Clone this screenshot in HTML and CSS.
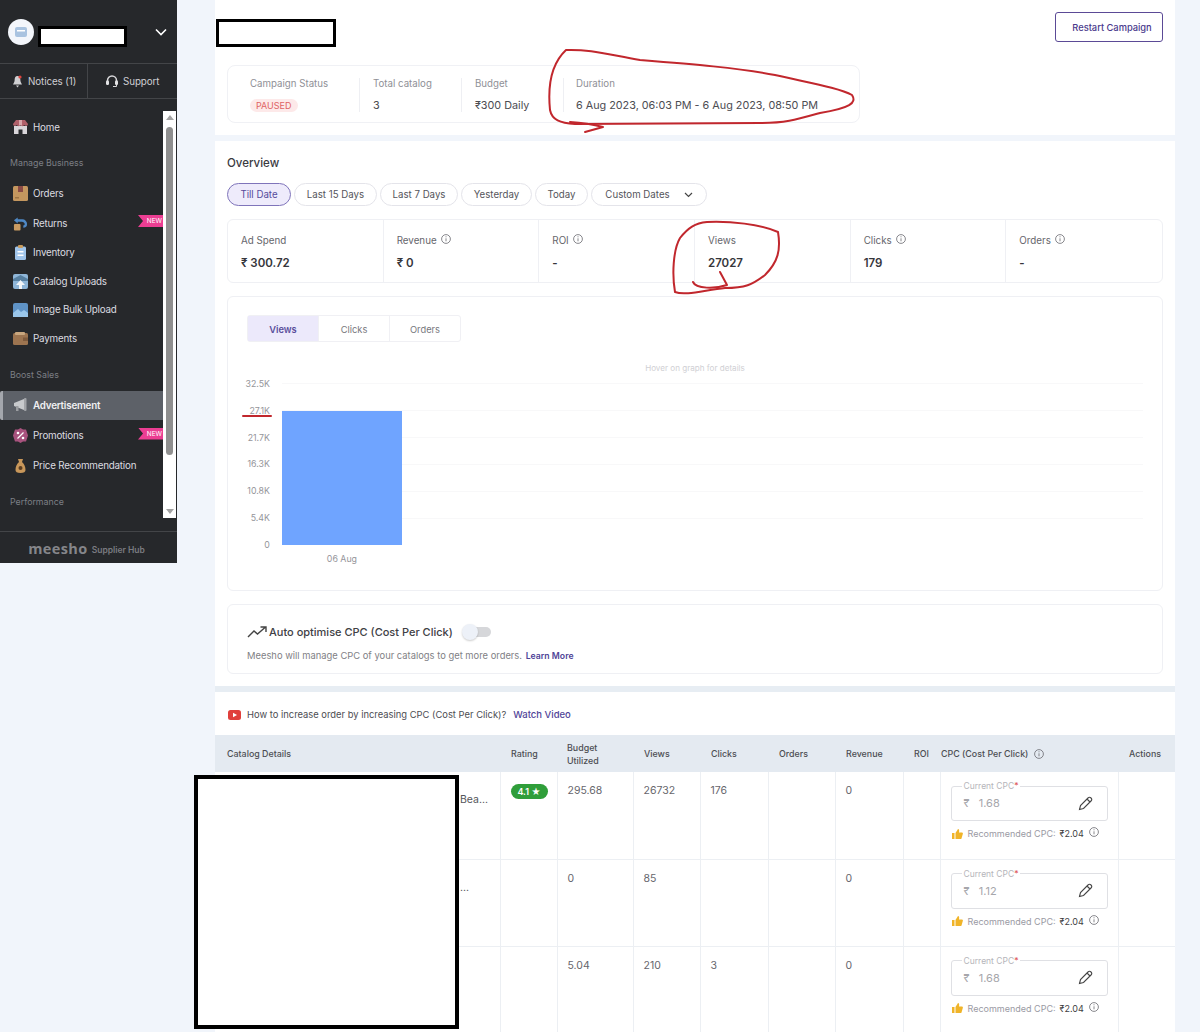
FILE: index.html
```html
<!DOCTYPE html>
<html lang="en">
<head>
<meta charset="utf-8">
<title>Campaign Details</title>
<link rel="stylesheet" href="styles.css">
</head>
<body>
<div class="page">
  <aside class="sidebar">
    <div class="brand">
      <span class="avatar"><svg width="14" height="14" viewBox="0 0 14 14"><rect x="1" y="2" width="12" height="10" rx="2" fill="#a9c3e0"/><rect x="3" y="5" width="8" height="1.5" fill="#fff"/></svg></span>
      <span class="redact-side"></span>
      <svg class="chev" width="12" height="8" viewBox="0 0 12 8"><path d="M1 1.5 6 6.5 11 1.5" fill="none" stroke="#fff" stroke-width="1.6"/></svg>
    </div>
    <div class="quick">
      <div class="quick-cell quick-notices">
        <svg width="11" height="13" viewBox="0 0 11 13"><path d="M5.5 1C3.2 1 2.6 3 2.6 5.4 2.6 7.4 1 8.6 1 9.6h9c0-1-1.6-2.2-1.6-4.2C8.4 3 7.8 1 5.5 1ZM4 10.6h3L5.5 12.4Z" fill="#cfcfd2"/><circle cx="8" cy="2" r="1.6" fill="#e0453f"/></svg>
        <span>Notices (1)</span>
      </div>
      <div class="quick-cell quick-support">
        <svg width="14" height="13" viewBox="0 0 14 13"><path d="M2.5 7V5.5a4.5 4.5 0 0 1 9 0V7" fill="none" stroke="#d8d8da" stroke-width="1.5"/><rect x="1" y="5.5" width="3" height="4.5" rx="1.2" fill="#e4e4e6"/><rect x="10" y="5.5" width="3" height="4.5" rx="1.2" fill="#e4e4e6"/><path d="M11.5 10v1.5H8" fill="none" stroke="#d8d8da"/></svg>
        <span>Support</span>
      </div>
    </div>
    <div class="menu-wrap">
      <nav class="menu">
        <a class="item item-home"><svg width="15" height="14" viewBox="0 0 15 14"><path d="M1 6h13v8H9.500V9.500h-4V14H1Z" fill="#d9d6da"/><path d="M3 0h9l3 4c0 2-2.500 2.500-3.700 1-1 1.500-2.800 1.500-3.800 0-1 1.500-2.800 1.500-3.800 0C2.500 6.500 0 6 0 4Z" fill="#b0606a"/><path d="M6 0h3v5.500H6Z" fill="#d7a5aa"/></svg>Home</a>
        <div class="label label-manage">Manage Business</div>
        <a class="item"><svg width="15" height="15" viewBox="0 0 15 15"><rect width="15" height="15" rx="1.5" fill="#c4975f"/><rect x="5" width="5" height="6" fill="#8a4a45"/><rect x="2" y="11" width="4" height="1.5" fill="#9c7444"/></svg>Orders</a>
        <a class="item"><svg width="16" height="15" viewBox="0 0 16 15"><rect x="1" y="8" width="7" height="7" rx="1" fill="#c99b62"/><path d="M1 4 5 1v2h5a5 5 0 0 1 5 5 4 4 0 0 1-4 4V9.500c1 0 1.500-.5 1.500-1.500S11 5.500 9.500 5.500H5v2Z" fill="#4f88c4"/></svg>Returns<span class="ribbon">NEW</span></a>
        <a class="item item-short"><svg width="15" height="15" viewBox="0 0 15 15"><rect x="2" y="1.500" width="11" height="13.500" rx="1.500" fill="#9fc4ea"/><rect x="5" y="0" width="5" height="3" rx="1" fill="#c79a5c"/><rect x="4.500" y="6" width="6" height="1.500" fill="#fff"/><rect x="4.500" y="9.500" width="6" height="1.500" fill="#fff"/></svg>Inventory</a>
        <a class="item item-tight"><svg width="15" height="15" viewBox="0 0 15 15"><rect width="15" height="15" rx="2" fill="#8fb6d8"/><path d="M0 5 7.500 1 15 5v2H0Z" fill="#567fa0"/><path d="M7.500 6 12 11H9v4H6v-4H3Z" fill="#f2f5f8"/></svg>Catalog Uploads</a>
        <a class="item item-tight"><svg width="15" height="14" viewBox="0 0 15 14"><rect width="15" height="14" rx="2" fill="#5f93c6"/><path d="M0 10 5 6l3 3 3-2 4 3v4H0Z" fill="#9ac6ea"/></svg>Image Bulk Upload</a>
        <a class="item item-tight"><svg width="15" height="13" viewBox="0 0 15 13"><rect y="1" width="15" height="12" rx="1.500" fill="#9c7450"/><rect x="2" width="10" height="3" rx="1" fill="#c8a67e"/><rect x="10" y="5.500" width="5" height="3.500" fill="#7e5a3c"/></svg>Payments</a>
        <div class="label label-boost">Boost Sales</div>
        <a class="item item-active"><svg width="15" height="14" viewBox="0 0 15 14"><path d="M1 5 11 1v11L1 8Z" fill="#c8cacd"/><rect x="11" y="0" width="2.500" height="13" rx="1" fill="#a2a4a8"/><rect x="3" y="8" width="2.500" height="5" fill="#9b9da1"/></svg>Advertisement</a>
        <a class="item"><svg width="15" height="15" viewBox="0 0 15 15"><path d="M7.500 0 10 1.500h3L15 7.500 13 13.500h-3L7.500 15 5 13.500H2L0 7.500 2 1.500h3Z" fill="#a8537e"/><path d="M4.500 10.500 10.500 4.500" stroke="#fff" stroke-width="1.200"/><circle cx="5" cy="5" r="1.300" fill="#fff"/><circle cx="10" cy="10" r="1.300" fill="#fff"/></svg>Promotions<span class="ribbon">NEW</span></a>
        <a class="item"><svg width="15" height="15" viewBox="0 0 15 15"><path d="M5 1h5L9 4c2.500 2 3.500 5 3.500 8 0 2-1.500 3-5 3s-5-1-5-3c0-3 1-6 3.500-8Z" fill="#c8975a"/><circle cx="7.500" cy="10" r="2" fill="#5b3e22"/></svg>Price Recommendation</a>
        <div class="label label-perf">Performance</div>
      </nav>
      <div class="scrollbar">
        <span class="arrow-up"></span>
        <span class="thumb"></span>
        <span class="arrow-down"></span>
      </div>
    </div>
    <div class="foot"><span class="logo">meesho</span><span class="hub">Supplier Hub</span></div>
  </aside>

  <main class="main">
    <section class="panel panel-top">
      <div class="top-bar">
        <span class="redact-title"></span>
        <button class="restart">Restart Campaign</button>
      </div>
      <div class="summary">
        <div class="sum-col sum-status"><div class="muted">Campaign Status</div><span class="paused">PAUSED</span></div>
        <div class="sum-col sum-catalog"><div class="muted">Total catalog</div><div class="sum-val">3</div></div>
        <div class="sum-col sum-budget"><div class="muted">Budget</div><div class="sum-val">₹300 Daily</div></div>
        <div class="sum-col sum-duration"><div class="muted">Duration</div><div class="sum-val">6 Aug 2023, 06:03 PM - 6 Aug 2023, 08:50 PM</div></div>
      </div>
    </section>

    <section class="panel panel-overview">
      <h2 class="heading">Overview</h2>
      <div class="pills">
        <button class="pill pill-on p1">Till Date</button>
        <button class="pill p2">Last 15 Days</button>
        <button class="pill p3">Last 7 Days</button>
        <button class="pill p4">Yesterday</button>
        <button class="pill p5">Today</button>
        <button class="pill p6">Custom Dates <svg width="9" height="6" viewBox="0 0 9 6"><path d="M1 1 4.500 4.500 8 1" fill="none" stroke="#444" stroke-width="1.200"/></svg></button>
      </div>
      <div class="stats">
        <div class="stat"><div class="stat-label">Ad Spend</div><div class="stat-val">₹ 300.72</div></div>
        <div class="stat"><div class="stat-label">Revenue <svg class="info" viewBox="0 0 10 10"><circle cx="5" cy="5" r="4.400"/><path d="M5 4.300v3M5 2.300v1"/></svg></div><div class="stat-val">₹ 0</div></div>
        <div class="stat"><div class="stat-label">ROI <svg class="info" viewBox="0 0 10 10"><circle cx="5" cy="5" r="4.400"/><path d="M5 4.300v3M5 2.300v1"/></svg></div><div class="stat-val">-</div></div>
        <div class="stat"><div class="stat-label">Views</div><div class="stat-val">27027</div></div>
        <div class="stat"><div class="stat-label">Clicks <svg class="info" viewBox="0 0 10 10"><circle cx="5" cy="5" r="4.400"/><path d="M5 4.300v3M5 2.300v1"/></svg></div><div class="stat-val">179</div></div>
        <div class="stat"><div class="stat-label">Orders <svg class="info" viewBox="0 0 10 10"><circle cx="5" cy="5" r="4.400"/><path d="M5 4.300v3M5 2.300v1"/></svg></div><div class="stat-val">-</div></div>
      </div>
      <div class="chart-card">
        <div class="tabs">
          <div class="tab tab-on">Views</div>
          <div class="tab">Clicks</div>
          <div class="tab">Orders</div>
        </div>
        <div class="hover-note">Hover on graph for details</div>
        <div class="chart">
          <div class="axis">
            <span>32.5K</span><span>27.1K</span><span>21.7K</span><span>16.3K</span><span>10.8K</span><span>5.4K</span><span>0</span>
          </div>
          <div class="plot-wrap">
            <div class="plot"><div class="bar"></div></div>
            <div class="x-label">06 Aug</div>
          </div>
        </div>
      </div>
      <div class="auto-card">
        <div class="auto-title">
          <svg width="20" height="12" viewBox="0 0 20 12"><path d="M1 11 7 5l3.500 3L18 1.500M13.500 1H19v5" fill="none" stroke="#444" stroke-width="1.400"/></svg>
          <span>Auto optimise CPC (Cost Per Click)</span>
          <span class="toggle"><span class="knob"></span></span>
        </div>
        <p class="auto-sub">Meesho will manage CPC of your catalogs to get more orders. <a class="learn">Learn More</a></p>
      </div>
    </section>

    <section class="panel panel-table">
      <div class="video-row">
        <svg width="13" height="10" viewBox="0 0 13 10"><rect width="13" height="10" rx="2.500" fill="#e0403c"/><path d="M5 2.700 9 5 5 7.300Z" fill="#fff"/></svg>
        <span>How to increase order by increasing CPC (Cost Per Click)?</span>
        <a class="watch">Watch Video</a>
      </div>
      <table class="grid">
        <colgroup>
          <col class="c-cat"><col class="c-rate"><col class="c-bud"><col class="c-view"><col class="c-click"><col class="c-ord"><col class="c-rev"><col class="c-roi"><col class="c-cpc"><col class="c-act">
        </colgroup>
        <thead>
          <tr>
            <th class="th-cat">Catalog Details</th><th>Rating</th><th class="th-bud">Budget Utilized</th><th>Views</th><th>Clicks</th><th>Orders</th><th>Revenue</th><th class="th-roi">ROI</th>
            <th class="th-cpc">CPC (Cost Per Click) <svg class="info" viewBox="0 0 10 10"><circle cx="5" cy="5" r="4.400"/><path d="M5 4.300v3M5 2.300v1"/></svg></th><th>Actions</th>
          </tr>
        </thead>
        <tbody>
          <tr>
            <td class="td-cat"><span class="cat-text cat-first">Bea...</span></td>
            <td><span class="rating">4.1 ★</span></td><td>295.68</td><td>26732</td><td>176</td><td></td><td>0</td><td></td>
            <td class="td-cpc">
              <fieldset class="cpc-box"><legend>Current CPC<i>*</i></legend><div class="cpc-row"><span>₹&nbsp;&nbsp; 1.68</span><svg width="15" height="15" viewBox="0 0 15 15"><path d="M1.500 13.500 2.500 9.500 10 2a1.800 1.800 0 0 1 3 3l-7.500 7.500ZM9 3l3 3" fill="none" stroke="#444" stroke-width="1.100"/></svg></div></fieldset>
              <div class="reco"><svg width="11" height="10" viewBox="0 0 11 10"><path d="M0 4h2.500v6H0ZM3.500 4 6 0c1 0 1.500 1 1 3.500h3c1 0 1 1 .8 1.500L9.500 9.500c-.2.400-.5.500-1 .5h-5Z" fill="#f0b429"/></svg><span>Recommended CPC:</span><b>₹2.04</b><svg class="info" viewBox="0 0 10 10"><circle cx="5" cy="5" r="4.400"/><path d="M5 4.300v3M5 2.300v1"/></svg></div>
            </td><td></td>
          </tr>
          <tr>
            <td class="td-cat"><span class="cat-text cat-second">...</span></td>
            <td></td><td>0</td><td>85</td><td></td><td></td><td>0</td><td></td>
            <td class="td-cpc">
              <fieldset class="cpc-box"><legend>Current CPC<i>*</i></legend><div class="cpc-row"><span>₹&nbsp;&nbsp; 1.12</span><svg width="15" height="15" viewBox="0 0 15 15"><path d="M1.500 13.500 2.500 9.500 10 2a1.800 1.800 0 0 1 3 3l-7.500 7.500ZM9 3l3 3" fill="none" stroke="#444" stroke-width="1.100"/></svg></div></fieldset>
              <div class="reco"><svg width="11" height="10" viewBox="0 0 11 10"><path d="M0 4h2.500v6H0ZM3.500 4 6 0c1 0 1.500 1 1 3.500h3c1 0 1 1 .8 1.500L9.500 9.500c-.2.400-.5.500-1 .5h-5Z" fill="#f0b429"/></svg><span>Recommended CPC:</span><b>₹2.04</b><svg class="info" viewBox="0 0 10 10"><circle cx="5" cy="5" r="4.400"/><path d="M5 4.300v3M5 2.300v1"/></svg></div>
            </td><td></td>
          </tr>
          <tr>
            <td class="td-cat"></td>
            <td></td><td>5.04</td><td>210</td><td>3</td><td></td><td>0</td><td></td>
            <td class="td-cpc">
              <fieldset class="cpc-box"><legend>Current CPC<i>*</i></legend><div class="cpc-row"><span>₹&nbsp;&nbsp; 1.68</span><svg width="15" height="15" viewBox="0 0 15 15"><path d="M1.500 13.500 2.500 9.500 10 2a1.800 1.800 0 0 1 3 3l-7.500 7.500ZM9 3l3 3" fill="none" stroke="#444" stroke-width="1.100"/></svg></div></fieldset>
              <div class="reco"><svg width="11" height="10" viewBox="0 0 11 10"><path d="M0 4h2.500v6H0ZM3.500 4 6 0c1 0 1.500 1 1 3.500h3c1 0 1 1 .8 1.500L9.500 9.500c-.2.400-.5.500-1 .5h-5Z" fill="#f0b429"/></svg><span>Recommended CPC:</span><b>₹2.04</b><svg class="info" viewBox="0 0 10 10"><circle cx="5" cy="5" r="4.400"/><path d="M5 4.300v3M5 2.300v1"/></svg></div>
            </td><td></td>
          </tr>
        </tbody>
      </table>
    </section>
  </main>
</div>
<div class="redact-catalog"></div>
<svg class="ink" width="1200" height="1032" viewBox="0 0 1200 1032">
  <path d="M566 50C590 49 610 55 640 60 690 64 740 68 775 75 810 83 840 88 852 95 857 103 850 108 820 113 795 120 785 123 760 123L575 124C560 123 552 120 550 110 548 90 550 65 566 50Z"/>
  <path d="M570 122C585 123 595 125 603 127L585 132"/>
  <path d="M707 222C730 221 760 224 778 232 781 250 778 262 765 275 752 285 745 288 725 288 705 290 685 296 675 292 672 275 673 250 680 238 688 228 695 223 707 222Z"/>
  <path d="M693 282C696 289 715 289 727 285L720 272"/>
  <path d="M243 416H271"/>
</svg>
</body>
</html>
```

FILE: styles.css
```css
* { box-sizing: border-box; }
html, body { margin: 0; padding: 0; }
body {
  position: relative;
  width: 1200px;
  height: 1032px;
  overflow: hidden;
  background: #f1f5fb;
  font-family: Inter, "Noto Sans", sans-serif;
  color: #4a4a4f;
}
.page { display: flex; align-items: flex-start; }

/* Sidebar */
.sidebar { width: 177px; height: 563px; flex: none; background: #26282b; display: flex; flex-direction: column; }
.brand { height: 63px; display: flex; align-items: center; padding-left: 8px; position: relative; }
.avatar { width: 26px; height: 26px; border-radius: 50%; background: #f3f6fb; display: flex; align-items: center; justify-content: center; }
.redact-side { width: 89px; height: 21px; margin-left: 4px; margin-top: 10px; background: #fff; border: 3px solid #000; }
.chev { margin-left: 28px; }
.quick { height: 36px; display: flex; border-top: 1px solid #434548; border-bottom: 1px solid #434548; }
.quick-cell { display: flex; align-items: center; font-size: 9.800px; letter-spacing: -.1px; color: #cfcfd3; gap: 5px; }
.quick-notices { width: 88px; padding-left: 12px; border-right: 1px solid #434548; }
.quick-support { padding-left: 17px; gap: 4px; }
.menu-wrap { flex: 1; display: flex; align-items: flex-start; padding-top: 12px; }
.menu { width: 163px; flex: none; padding-top: 1px; margin-bottom: -1px; }
.item { position: relative; height: 30px; display: flex; align-items: center; gap: 5px; padding-left: 13px; font-size: 9.800px; letter-spacing: -.2px; color: #dcdce0; }
.item svg { width: 15px; flex: none; }
.item-home { height: 30px; }
.item-short { height: 29px; }
.item-tight { height: 28.500px; }
.item-active { height: 29px; margin-bottom: 1px; background: #5d6168; color: #f0f0f2; font-weight: 600; border-left: 3px solid #a4a7ad; padding-left: 10px; border-radius: 2px 0 0 2px; }
.label { font-size: 8.800px; color: #7c7f85; padding-left: 10px; }
.label-manage { height: 36px; padding-top: 15px; }
.label-boost { height: 38px; padding-top: 16px; }
.label-perf { padding-top: 15px; }
.ribbon { position: absolute; right: 0; top: 7px; width: 25px; height: 12px; background: #ec3e93; color: #fff; font-size: 6.500px; letter-spacing: 0; line-height: 12px; text-align: right; padding-right: 1px; clip-path: polygon(0 0, 100% 0, 100% 100%, 0 100%, 5px 50%); }
.scrollbar { width: 13px; height: 407px; background: #fff; display: flex; flex-direction: column; align-items: center; justify-content: space-between; padding: 4px 0; position: relative; }
.arrow-up { width: 0; height: 0; border-left: 4px solid transparent; border-right: 4px solid transparent; border-bottom: 5px solid #a3a3a3; }
.arrow-down { width: 0; height: 0; border-left: 4px solid transparent; border-right: 4px solid transparent; border-top: 5px solid #a3a3a3; }
.thumb { width: 7px; height: 328px; margin-top: 4px; margin-bottom: 51px; background: #8f8f8f; border-radius: 4px; }
.foot { height: 32px; padding: 2px 4px 0 0; border-top: 1px solid #434548; display: flex; align-items: center; justify-content: center; gap: 4px; }
.logo { font-size: 14.500px; font-weight: 700; letter-spacing: .4px; color: #85868a; font-family: "Open Sans", sans-serif; }
.hub { font-size: 8.500px; font-weight: 600; color: #7a7b80; margin-top: 3px; }

/* Main */
.main { width: 960px; margin-left: 38px; flex: none; }
.panel { background: #fff; }
.panel-top { height: 135px; padding: 12px 12px 0; margin-bottom: 6px; }
.panel-overview { height: 551px; padding: 0 12px; border-bottom: 6px solid #e7edf3; }
.top-bar { display: flex; justify-content: space-between; align-items: flex-start; height: 53px; }
.redact-title { width: 120px; height: 28px; margin-top: 7px; margin-left: -11px; background: #fff; border: 3px solid #000; }
.restart { width: 108px; height: 30px; padding: 1px 0 0 6px; background: #fff; border: 1px solid #5b4a96; border-radius: 3px; color: #4a3a8c; font: 500 9.300px Inter, sans-serif; }
.summary { width: 633px; height: 58px; border: 1px solid #f0f1f5; border-radius: 8px; display: flex; align-items: center; }
.sum-col { height: 34px; margin-top: 1px; display: flex; flex-direction: column; justify-content: space-between; }
.sum-status { width: 132px; padding-left: 22px; border-right: 1px solid #eeeff3; }
.sum-catalog { width: 102px; padding-left: 13px; border-right: 1px solid #eeeff3; }
.sum-budget { width: 102px; padding-left: 13px; border-right: 1px solid #eeeff3; }
.sum-duration { padding-left: 12px; }
.muted { font-size: 9.700px; color: #8f9096; }
.sum-val { font-size: 10.800px; color: #4c4c52; }
.paused { align-self: flex-start; height: 13px; line-height: 13px; padding: 0 6px; border-radius: 7px; background: #fde9e9; color: #e06464; font-size: 9px; }
.heading { margin: 0; padding-top: 15px; height: 42px; font-size: 11.500px; font-weight: 500; color: #3a3a3f; }
.pills { display: flex; gap: 3px; height: 24px; }
.pill { height: 23px; border: 1px solid #e4e4ea; border-radius: 12px; background: #fff; font: 9.700px Inter, sans-serif; color: #55555b; padding: 0; display: flex; align-items: center; justify-content: center; gap: 14px; }
.pill-on { background: #eeebfb; border-color: #7f74ba; color: #574b9c; }
.p1 { width: 64px; } .p2 { width: 83px; } .p3 { width: 78px; } .p4 { width: 71px; } .p5 { width: 53px; } .p6 { width: 116px; }
.stats { margin-top: 12px; height: 64px; border: 1px solid #eff0f4; border-radius: 6px; display: grid; grid-template-columns: repeat(6, 1fr); }
.stat { padding: 13px 0 0 13px; border-right: 1px solid #eff0f4; }
.stat:last-child { border-right: 0; }
.stat-label { font-size: 9.800px; color: #66666c; display: flex; align-items: center; gap: 1px; height: 14px; }
.stat-label .info { margin-left: 3px; margin-top: -3px; }
.stat-val { margin-top: 9px; font-size: 11.500px; font-weight: 600; color: #36363b; }
.info { width: 10px; height: 10px; fill: none; stroke: #6a6a70; stroke-width: .8; flex: none; }
.chart-card { margin-top: 13px; height: 295px; border: 1px solid #eff0f4; border-radius: 6px; padding: 18px 19px 0; }
.tabs { display: flex; width: 214px; height: 27px; border: 1px solid #f0f0f4; border-radius: 3px; }
.tab { flex: 1; display: flex; align-items: center; justify-content: center; padding-top: 1px; font-size: 9.300px; color: #77777d; border-right: 1px solid #f0f0f4; }
.tab:last-child { border-right: 0; }
.tab-on { background: #ece9fb; color: #5a4f9c; font-weight: 600; }
.hover-note { margin-top: 20px; height: 14px; line-height: 13px; text-align: center; font-size: 8.100px; color: #d0d0d4; }
.chart { display: flex; margin-top: 7px; margin-left: -14px; }
.axis { width: 37px; height: 171px; margin-top: -4px; display: flex; flex-direction: column; justify-content: space-between; align-items: flex-end; font-size: 8.800px; line-height: 10px; color: #95959a; }
.plot-wrap { margin-left: 12px; width: 863px; }
.plot { height: 162px; display: flex; align-items: flex-end; border-top: 1px solid #f8f8f9; background: repeating-linear-gradient(to bottom, transparent 0, transparent 26px, #f8f8f9 26px, #f8f8f9 27px); }
.bar { width: 120px; height: 134px; background: #6fa4ff; }
.x-label { width: 120px; margin-top: 8px; text-align: center; font-size: 8.800px; color: #95959a; }
.auto-card { margin-top: 13px; height: 70px; border: 1px solid #eff0f4; border-radius: 6px; padding: 19px 19px 0; }
.auto-title { display: flex; align-items: center; gap: 2px; font-size: 11px; font-weight: 500; color: #404045; height: 16px; }
.toggle { position: relative; width: 26px; height: 10px; margin-left: 10px; background: #d6d7da; border-radius: 5px; }
.knob { position: absolute; left: -3px; top: -3px; width: 16px; height: 16px; border-radius: 50%; background: #edf1f8; box-shadow: 0 1px 2px rgba(0,0,0,.2); }
.auto-sub { margin: 10px 0 0; font-size: 9.400px; color: #7f7f85; }
.learn { margin-left: 1px; font-size: 8.700px; font-weight: 600; color: #4f4497; }

/* Table */
.video-row { height: 43px; padding: 2px 0 0 13px; display: flex; align-items: center; gap: 6px; font-size: 9.400px; color: #4d4d52; }
.watch { margin-left: 1px; font-size: 9.500px; color: #4f4497; font-weight: 500; }
.grid { width: 960px; border-collapse: collapse; table-layout: fixed; font-size: 10.500px; color: #66666c; }
.c-cat { width: 285px; } .c-rate { width: 57px; } .c-bud { width: 76px; } .c-view { width: 67px; } .c-click { width: 68px; } .c-ord { width: 67px; } .c-rev { width: 68px; } .c-roi { width: 37px; } .c-cpc { width: 178px; } .c-act { width: 57px; }
.grid thead tr { height: 37px; background: #e4eaf1; }
.grid th { text-align: left; font-size: 8.900px; font-weight: 500; color: #4c4e53; padding: 0 0 0 11px; line-height: 13px; }
.grid .th-cat { padding-left: 12px; }
.grid .th-bud { padding: 0 20px 0 10px; }
.grid .th-roi { padding: 0 0 0 11px; }
.grid .th-cpc { padding-left: 1px; }
.grid .th-cpc .info { vertical-align: -2px; margin-left: 3px; }
.grid tbody tr { height: 87px; }
.grid td { vertical-align: top; padding: 12px 10px 0; border-right: 1px solid #eceff3; border-bottom: 1px solid #eceff3; }
.grid td:last-child { border-right: 0; }
.grid .td-cat { padding: 0; }
.cat-text { display: block; padding-left: 245px; font-size: 10.500px; color: #55555a; }
.cat-first { padding-top: 21px; }
.cat-second { padding-top: 21px; }
.rating { display: inline-block; height: 15px; line-height: 15px; width: 37px; text-align: center; background: #2f9e3a; color: #fff; border-radius: 8px; font-size: 9px; font-weight: 600; }
.grid .td-cpc { padding: 9px 10px 0; }
.cpc-box { margin: 0; width: 157px; height: 40px; border: 1px solid #dfe0e4; border-radius: 3px; padding: 0 14px 0 12px; }
.cpc-box legend { padding: 0 2px; margin-left: -2px; font-size: 8.500px; line-height: 10px; color: #b5b5ba; }
.cpc-box i { color: #e05a5a; font-style: normal; }
.cpc-row { display: flex; justify-content: space-between; align-items: center; font-size: 11px; color: #a6a6ab; height: 24px; }
.reco { margin-top: 5px; display: flex; align-items: center; gap: 1px; padding-left: 1px; font-size: 9px; color: #9a9aa3; height: 15px; }
.reco span { margin-left: 4px; }
.reco b { margin-left: 3px; font-weight: 400; color: #3f3f44; }
.reco .info { margin-left: 4px; margin-top: -3px; }

/* Overlaid redaction and pen marks */
.redact-catalog { position: absolute; left: 194px; top: 775px; width: 265px; height: 254px; background: #fff; border: 4px solid #000; }
.ink { position: absolute; left: 0; top: 0; pointer-events: none; fill: none; stroke: #c1272d; stroke-width: 2; stroke-linecap: round; stroke-linejoin: round; }
```
